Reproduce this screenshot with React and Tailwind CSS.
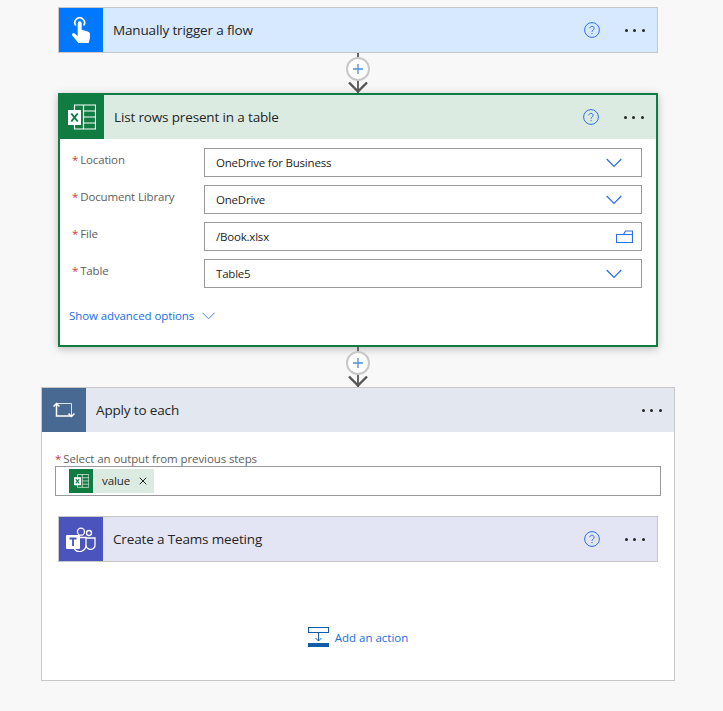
import { X } from 'lucide-react';

const HelpIcon = () => (
  <svg width="16" height="16" viewBox="0 0 16 16" fill="none" className="text-[#2f6fed]">
    <circle cx="8" cy="8" r="7.4" stroke="currentColor" strokeWidth="1" />
    <path d="M5.900 6.300c0-1.200.9-2 2.100-2s2.100.8 2.100 1.900c0 1.800-2.100 1.800-2.100 3.600" stroke="currentColor" strokeWidth="1" />
    <circle cx="8" cy="11.600" r=".7" fill="currentColor" />
  </svg>
);

const Dots = () => (
  <div className="flex gap-[5.5px]">
    <span className="w-[3px] h-[3px] rounded-full bg-[#252525]" />
    <span className="w-[3px] h-[3px] rounded-full bg-[#252525]" />
    <span className="w-[3px] h-[3px] rounded-full bg-[#252525]" />
  </div>
);

const Chevron = () => (
  <svg width="16" height="10" viewBox="0 0 16 10" fill="none">
    <path d="M.7 1 8 8.400 15.300 1" stroke="#2f6fed" strokeWidth="1.300" />
  </svg>
);

const FolderIcon = () => (
  <svg width="17" height="13" viewBox="0 0 17 13" fill="none" className="-mr-[11px]">
    <path d="M.5 12.500V4.500h7l2-3.500h7v11.500z" stroke="#2f6fed" strokeWidth="1.200" />
    <path d="M8 4.500h8.500" stroke="#2f6fed" strokeWidth="1" />
  </svg>
);

const ExcelIcon = ({ size = 28 }) => (
  <svg width={size} height={size * 26 / 28} viewBox="0 0 28 26" fill="none">
    <path d="M6.500 1h21v24h-21z" stroke="#fff" strokeWidth="1.200" />
    <path d="M15.500 1v24M15.500 7h12M15.500 13h12M15.500 19h12" stroke="#fff" strokeWidth="1.200" />
    <rect x="0" y="6" width="13" height="15" fill="#fff" />
    <path d="M3.300 9.500 9.700 17.500M9.700 9.500 3.300 17.500" stroke="#107c41" strokeWidth="2" />
  </svg>
);

const TouchIcon = () => (
  <svg width="18" height="26" viewBox="0 0 18 26" fill="none">
    <path d="M3.800 8.500a4.800 4.800 0 1 1 7.800 0" stroke="#fff" strokeWidth="1.700" />
    <path d="M5.700 6.200a2 2 0 0 1 4 0v6.500l6 1.700c1.400.4 2.300 1.300 2.300 2.600v4l-1.300 5H6.500L.4 18.700c-.6-.9-.4-1.800.3-2.300.8-.5 1.700-.3 2.300.3l2.700 2.500z" fill="#fff" />
  </svg>
);

const LoopIcon = () => (
  <svg width="22" height="16" viewBox="0 0 22 16" fill="none">
    <path d="M3.500 1.500V14H19" stroke="#fff" strokeWidth="1.500" />
    <path d="M.5 4.500 3.500 1.500 6.500 4.500" stroke="#fff" strokeWidth="1.500" />
    <path d="M4 1.500H18.500V14.500" stroke="#fff" strokeWidth="1" opacity=".8" />
    <path d="M15.500 11.500 18.500 14.500 21.500 11.500" stroke="#fff" strokeWidth="1.500" />
  </svg>
);

const TeamsIcon = () => (
  <svg width="30" height="25" viewBox="0 0 30 25" fill="none">
    <circle cx="15" cy="4.700" r="3.500" stroke="#fff" strokeWidth="1.300" />
    <circle cx="23" cy="6" r="2.500" stroke="#fff" strokeWidth="1.300" />
    <path d="M13 10.500h7v7.500a6.500 6.500 0 0 1-12 3.500" stroke="#fff" strokeWidth="1.300" />
    <path d="M20 11h9v6.500a4.500 4.500 0 0 1-9 .8" stroke="#fff" strokeWidth="1.300" />
    <rect x="0" y="8" width="14" height="14" rx="1" fill="#fff" />
    <path d="M3.500 11.500h7M7 11.500v7.500" stroke="#4b53bc" strokeWidth="1.800" />
  </svg>
);

const Connector = ({ height }) => (
  <div className={`relative flex flex-col items-center shrink-0 w-[26px] ${height}`}>
    <div className="w-[2px] h-full bg-[#666666]" />
    <div className="absolute top-[4px] w-[24px] h-[24px] rounded-full bg-white border-2 border-[#c8c8c8] flex items-center justify-center">
      <svg width="12" height="12" viewBox="0 0 12 12"><path d="M6 1v10M1 6h10" stroke="#4a90d9" strokeWidth="1.300" /></svg>
    </div>
    <svg className="absolute bottom-0" width="20" height="12" viewBox="0 0 20 12" fill="none">
      <path d="M1 1.500 10 10.500 19 1.500" stroke="#555555" strokeWidth="2.400" />
    </svg>
  </div>
);

const CardHeader = ({ icon, iconBg, bg, title, right = true }) => (
  <div className={`flex items-center h-[44px] ${bg}`}>
    <div className={`w-[44px] h-[44px] flex items-center justify-center shrink-0 ${iconBg}`}>{icon}</div>
    <span className="ml-[10px] text-[13.5px] tracking-[-0.15px] text-[#252525] flex-1 truncate">{title}</span>
    {right && <HelpIcon />}
    <div className="ml-[24.5px] mr-[12.5px]"><Dots /></div>
  </div>
);

const Field = ({ label, value, trailing }) => (
  <div className="flex items-center">
    <div className="w-[144px] pl-[12px] pb-[5px] text-[11.5px] tracking-[-0.15px] text-[#605e5c] whitespace-nowrap">
      <span className="text-[#d13438] mr-[2px]">*</span>{label}
    </div>
    <div className="w-[438px] h-[29px] flex items-center justify-between border border-[#999999] bg-white pl-[11px] pr-[19px]">
      <span className="text-[11.5px] tracking-[-0.2px] text-[#252525]">{value}</span>
      {trailing || <Chevron />}
    </div>
  </div>
);

export default function App() {
  return (
    <div className="min-h-[711px] bg-[#f8f8f8] font-['Open_Sans',sans-serif] pt-[7px] pl-[41px] overflow-hidden">
      <div className="w-[634px] flex flex-col items-center">
        <div className="w-[600px] border border-[#c8c8c8] h-[46px]">
          <CardHeader icon={<TouchIcon />} iconBg="bg-[#0078ff]" bg="bg-[#d7e9ff]" title="Manually trigger a flow" />
        </div>

        <Connector height="h-[40px]" />

        <div className="w-[600px] h-[254px] border-2 border-[#107c41] bg-white shadow-[0_2px_8px_rgba(0,0,0,0.25)]">
          <CardHeader icon={<ExcelIcon />} iconBg="bg-[#107c41]" bg="bg-[#dcebe2]" title="List rows present in a table" />
          <div className="pt-[9px] flex flex-col gap-[8px]">
            <Field label="Location" value="OneDrive for Business" />
            <Field label="Document Library" value="OneDrive" />
            <Field label="File" value="/Book.xlsx" trailing={<FolderIcon />} />
            <Field label="Table" value="Table5" />
          </div>
          <div className="mt-[19px] ml-[9px] flex items-center gap-[8px] text-[11.5px] tracking-[-0.1px] text-[#1a6fdf]">
            <span>Show advanced options</span>
            <svg width="13" height="8" viewBox="0 0 13 8" fill="none"><path d="M.5.8 6.500 6.800 12.500.8" stroke="#2f6fed" strokeWidth=".9" /></svg>
          </div>
        </div>

        <Connector height="h-[40px]" />

        <div className="w-[634px] h-[294px] border border-[#c8c8c8] bg-white">
          <CardHeader icon={<LoopIcon />} iconBg="bg-[#486991]" bg="bg-[#e3e7ef]" title="Apply to each" right={false} />
          <div className="pl-[13px] pt-[20px] text-[11.5px] tracking-[-0.1px] leading-[14px] text-[#605e5c]">
            <span className="text-[#d13438] mr-[2px]">*</span>Select an output from previous steps
          </div>
          <div className="ml-[13px] w-[606px] h-[30px] border border-[#999999] flex items-center pl-[13px]">
            <div className="w-[24px] h-[24px] bg-[#107c41] flex items-center justify-center"><ExcelIcon size={15} /></div>
            <div className="h-[24px] bg-[#dcebe2] flex items-center pl-[9px] pr-[5px] gap-[7px] text-[11.5px] tracking-[-0.1px] text-[#252525]">
              value <X size={12} strokeWidth={2} />
            </div>
          </div>
          <div className="ml-[16px] mt-[20px] w-[600px] h-[46px] border border-[#c8c8c8]">
            <CardHeader icon={<TeamsIcon />} iconBg="bg-[#4b53bc]" bg="bg-[#e4e5f4]" title="Create a Teams meeting" />
          </div>
          <div className="mt-[65px] flex items-center justify-center gap-[6px] text-[11.5px] text-[#1a6fdf]">
            <svg width="21" height="20" viewBox="0 0 21 20" fill="none">
              <rect x=".5" y=".5" width="20" height="5" stroke="#0f5ca8" />
              <path d="M10.500 6v8M7.500 11l3 3 3-3" stroke="#0f5ca8" />
              <rect x="0" y="16" width="21" height="4" fill="#0f5ca8" />
            </svg>
            <span className="pt-[2px]">Add an action</span>
          </div>
        </div>
      </div>
    </div>
  );
}
